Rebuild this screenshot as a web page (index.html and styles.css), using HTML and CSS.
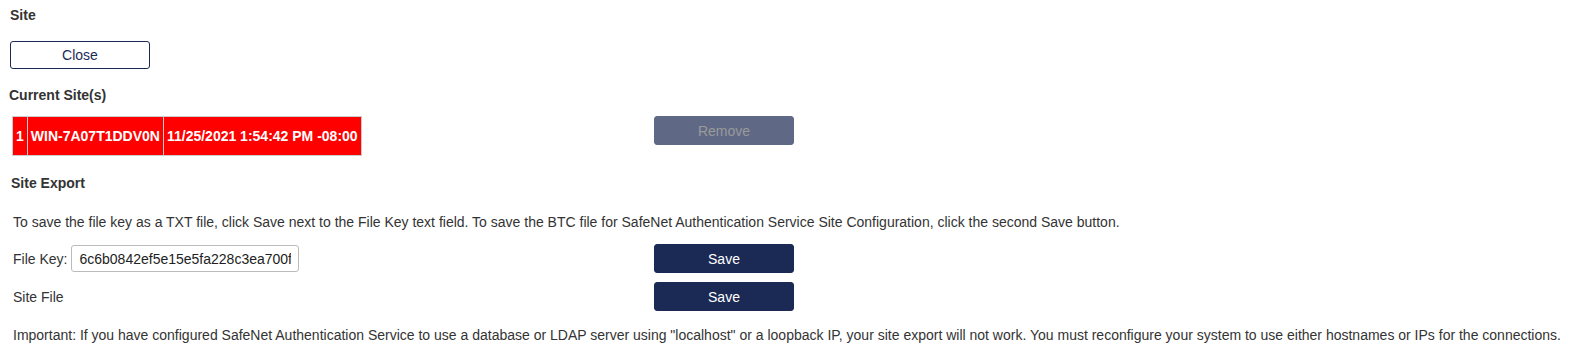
FILE: index.html
```html
<!DOCTYPE html>
<html>
<head>
<meta charset="utf-8">
<link rel="stylesheet" href="styles.css">
</head>
<body>
<div class="page">
  <div class="title title-site">Site</div>
  <button class="btn btn-outline">Close</button>
  <div class="title title-current">Current Site(s)</div>
  <div class="row row-sites">
    <div class="col-left">
      <table class="sites">
        <tr>
          <td>1</td>
          <td>WIN-7A07T1DDV0N</td>
          <td>11/25/2021 1:54:42 PM -08:00</td>
        </tr>
      </table>
    </div>
    <button class="btn btn-disabled">Remove</button>
  </div>
  <div class="title title-export">Site Export</div>
  <p class="text intro">To save the file key as a TXT file, click Save next to the File Key text field. To save the BTC file for SafeNet Authentication Service Site Configuration, click the second Save button.</p>
  <div class="row row-key">
    <div class="col-left">
      <label class="text">File Key:</label>
      <input class="key-input" type="text" value="6c6b0842ef5e15e5fa228c3ea700f1b9">
    </div>
    <button class="btn btn-primary">Save</button>
  </div>
  <div class="row row-file">
    <div class="col-left"><span class="text">Site File</span></div>
    <button class="btn btn-primary">Save</button>
  </div>
  <p class="text important">Important: If you have configured SafeNet Authentication Service to use a database or LDAP server using "localhost" or a loopback IP, your site export will not work. You must reconfigure your system to use either hostnames or IPs for the connections.</p>
</div>
</body>
</html>
```
FILE: styles.css
```css
* { box-sizing: border-box; }
html, body { margin: 0; padding: 0; background: #fff; }
body {
  font-family: "Liberation Sans", Arial, sans-serif;
  color: #333;
  font-size: 14px;
}
.page { padding: 0; }
.title {
  font-weight: bold;
  font-size: 14px;
  line-height: 16px;
  color: #333;
}
.title-site { margin: 7px 0 0 10px; }
.btn {
  display: block;
  width: 140px;
  height: 29px;
  border-radius: 3px;
  font-family: "Liberation Sans", Arial, sans-serif;
  font-size: 14px;
  padding: 0;
  cursor: pointer;
}
.btn-outline {
  height: 28px;
  margin: 18px 0 0 10px;
  background: #fff;
  border: 1px solid #1b2a55;
  color: #1b2a55;
}
.title-current { margin: 18px 0 0 9px; }
.row { display: flex; align-items: center; }
.col-left { width: 654px; flex: none; display: flex; align-items: center; }
.row-sites { margin-top: 13px; align-items: flex-start; }
.sites {
  margin-left: 12px;
  border-collapse: collapse;
  background: #ff0000;
}
.sites td {
  border: 1px solid #ccc;
  color: #fff;
  font-weight: bold;
  font-size: 14px;
  height: 39px;
  padding: 0 3px;
  white-space: nowrap;
}
.btn-disabled {
  background: #5f6986;
  border: 1px solid #5f6986;
  color: #9a9a9a;
}
.btn-primary {
  background: #1b2a55;
  border: 1px solid #1b2a55;
  color: #fff;
}
.title-export { margin: 19px 0 0 11px; }
.text { font-size: 14px; line-height: 16px; color: #333; }
.intro { margin: 23px 0 0 13px; }
.row-key { margin-top: 14px; }
.row-key .col-left { padding-left: 13px; }
.key-input {
  margin-left: 4px;
  width: 228px;
  height: 27px;
  border: 1px solid #bbb;
  border-radius: 3px;
  padding: 0 7px;
  font-family: "Liberation Sans", Arial, sans-serif;
  font-size: 14px;
  color: #222;
}
.row-file { margin-top: 9px; }
.row-file .col-left { padding-left: 13px; }
.important { margin: 16px 0 0 13px; }
```
